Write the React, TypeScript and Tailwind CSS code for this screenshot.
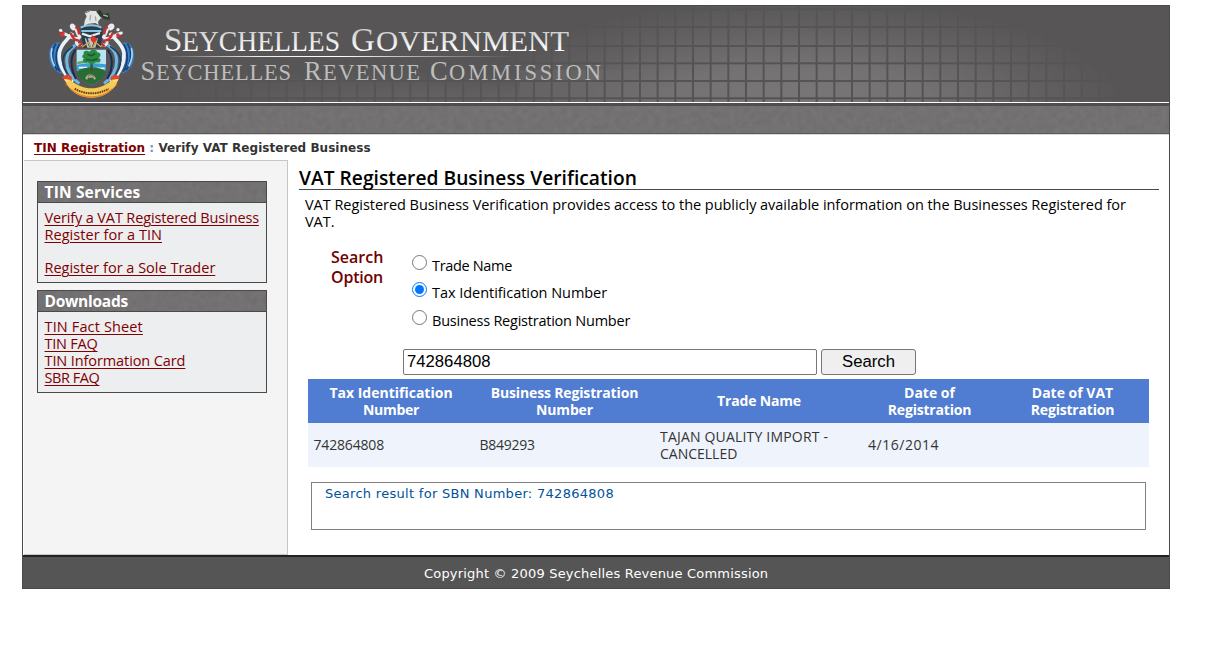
import React from "react";

const gridX = Array.from({ length: 58 }, (_, i) => 144.2 + i * 17.67);
const gridY = [8.5, 26, 45, 62.3, 80, 97.3];

function Emblem() {
  return (
    <g transform="translate(40 5) scale(0.3333)">
      {/* sailfish supporters */}
      <path d="M58 112C34 112 26 134 28 156C30 182 44 200 66 206C56 184 50 166 54 146Z" fill="#3d7fc0" />
      <path d="M48 116C34 134 34 170 52 196M58 118C46 140 44 172 60 200" stroke="#12407f" strokeWidth="5" fill="none" />
      <path d="M36 130C31 148 34 166 44 184" stroke="#a9d8f2" strokeWidth="5" fill="none" />
      <path d="M250 112C274 112 284 134 282 156C280 182 266 200 246 206C254 184 260 166 256 146Z" fill="#3d7fc0" />
      <path d="M262 116C276 134 276 170 258 196M252 118C264 140 266 172 250 200" stroke="#12407f" strokeWidth="5" fill="none" />
      <path d="M274 130C279 148 276 166 266 184" stroke="#a9d8f2" strokeWidth="5" fill="none" />
      <path d="M98 84C84 104 62 116 58 144C54 172 70 204 98 232" stroke="#e9f2fa" strokeWidth="11" fill="none" />
      <path d="M106 120C88 134 80 146 80 168C80 194 94 218 118 236" stroke="#6fb8e6" strokeWidth="9" fill="none" />
      <path d="M98 124C82 138 70 146 68 166C68 186 78 204 90 218" stroke="#173f66" strokeWidth="5" fill="none" />
      <path d="M210 84C224 104 248 116 252 144C254 172 240 204 212 232" stroke="#e9f2fa" strokeWidth="11" fill="none" />
      <path d="M204 120C222 134 230 146 230 168C230 194 216 218 192 236" stroke="#6fb8e6" strokeWidth="9" fill="none" />
      <path d="M210 124C228 138 240 146 242 166C242 186 232 204 220 218" stroke="#173f66" strokeWidth="5" fill="none" />
      <path d="M108 134C92 150 88 186 108 222M202 134C218 150 222 186 202 222" stroke="#182d4c" strokeWidth="6" fill="none" />
      {/* mantling */}
      <path d="M120 96C108 88 112 70 100 62C94 56 90 66 100 72M116 100C94 106 84 86 66 84M124 118C112 126 104 112 114 104" stroke="#ececf0" strokeWidth="9" fill="none" strokeLinecap="round" />
      <path d="M190 96C202 88 198 70 210 62C218 56 224 66 212 72M194 100C216 106 226 86 244 84M186 118C198 126 208 112 196 104" stroke="#ececf0" strokeWidth="9" fill="none" strokeLinecap="round" />
      <path d="M106 66C116 70 116 80 117 88M92 84C98 100 108 108 118 106M58 82L74 86M116 124L128 114" stroke="#d32b2b" strokeWidth="7" fill="none" />
      <path d="M204 66C194 70 194 80 193 88M218 84C212 100 202 108 192 106M230 88L242 96M194 124L182 114" stroke="#d32b2b" strokeWidth="7" fill="none" />
      <circle cx="62" cy="76" r="5" fill="#eee" /><circle cx="66" cy="90" r="5" fill="#d33" />
      <circle cx="234" cy="74" r="5" fill="#eee" /><circle cx="234" cy="90" r="5" fill="#d33" />
      {/* helmet and crest */}
      <path d="M122 74C126 58 182 58 188 76L182 128H130Z" fill="#293a49" />
      <path d="M122 68C138 58 168 58 184 68M124 78H184" stroke="#86c7e6" strokeWidth="6" fill="none" />
      <path d="M126 86L150 94L180 84" stroke="#e6edf1" strokeWidth="7" fill="none" />
      <path d="M134 100H174L166 128H142Z" fill="#b9c7d1" />
      <path d="M140 98L150 126M168 98L158 126" stroke="#314254" strokeWidth="5" />
      <path d="M156 90L172 102L164 118L152 106Z" fill="#dd3427" />
      <path d="M126 126L146 112L152 128M184 126L166 112L158 128" stroke="#d8a23a" strokeWidth="4" fill="none" />
      <path d="M134 24C142 14 156 18 164 18C172 16 180 26 190 34L186 40L182 40L174 50L176 60L166 54L146 56L132 62L134 48L140 34Z" fill="#e2e5e3" />
      <path d="M170 20L180 14L190 28L206 24L210 44L194 42L182 36ZM136 24L150 18" fill="#2b3830" stroke="#38463d" strokeWidth="2" />
      <path d="M190 30L204 34" stroke="#a7b5a0" strokeWidth="4" />
      <path d="M152 30L150 46M166 34L168 48" stroke="#a3a9ab" strokeWidth="4" fill="none" />
      {/* shield */}
      <path d="M110 134H198V178C198 214 178 230 154 240C130 230 110 214 110 178Z" fill="#b8e3f5" />
      <path d="M110 180C132 172 174 174 198 178V196H110Z" fill="#3c9fd2" />
      <path d="M112 170L138 166L148 172L112 178Z" fill="#5ba765" />
      <path d="M116 188H142M170 190H194" stroke="#e8f6fb" strokeWidth="5" />
      <path d="M111 200C130 184 176 184 197 198C192 220 174 232 154 240C134 232 116 220 111 200Z" fill="#276c34" />
      <path d="M152 170L150 198H160L157 168Z" fill="#3d5a26" />
      <path d="M132 148C126 138 142 134 148 140C156 130 172 134 172 142C184 142 184 156 176 158C188 164 180 176 168 172C158 180 148 178 144 172C132 176 124 168 132 160C124 158 126 150 132 148Z" fill="#2c8742" />
      <path d="M142 148L154 152L166 146M138 164L156 166L172 162" stroke="#15552c" strokeWidth="4" fill="none" />
      <path d="M136 222C136 204 164 202 168 222L162 224L160 218H144L142 224Z" fill="#b9a58a" />
      <path d="M144 214L152 209L161 214" stroke="#59462f" strokeWidth="2" fill="none" />
      {/* motto ribbon */}
      <path d="M66 216L82 208L96 216L94 240L76 242L78 230Z" fill="#df4a2c" />
      <path d="M240 216L226 208L212 216L214 240L232 242L230 230Z" fill="#df4a2c" />
      <path d="M72 222L90 224C108 240 132 250 154 250C178 250 200 240 216 224L236 222L226 244C206 266 182 278 154 278C126 278 100 266 84 244Z" fill="#f5ca55" />
      <path d="M104 251C120 261 138 265 154 265C172 265 190 261 206 251" stroke="#6d3f20" strokeWidth="6" strokeDasharray="5 2" fill="none" />
      <path d="M92 252C112 270 134 276 154 276C176 276 200 268 216 252" stroke="#e9872f" strokeWidth="4" fill="none" />
      <path d="M74 224L88 228M234 224L220 228" stroke="#f9dfa0" strokeWidth="4" />
    </g>
  );
}

function Banner() {
  return (
    <svg viewBox="23 5 1146 97" width="1146" height="97" className="block shrink-0">
      <defs>
        <radialGradient id="glow" gradientUnits="userSpaceOnUse" cx="0" cy="0" r="1" gradientTransform="translate(800 108) scale(330 112)">
          <stop offset="0" stopColor="#fff" />
          <stop offset="0.4" stopColor="#fff" stopOpacity="0.82" />
          <stop offset="0.75" stopColor="#fff" stopOpacity="0.3" />
          <stop offset="1" stopColor="#fff" stopOpacity="0" />
        </radialGradient>
        <linearGradient id="low" gradientUnits="userSpaceOnUse" x1="150" y1="0" x2="760" y2="0">
          <stop offset="0" stopColor="#fff" stopOpacity="0" />
          <stop offset="0.25" stopColor="#fff" stopOpacity="0.25" />
          <stop offset="0.45" stopColor="#fff" stopOpacity="0.38" />
          <stop offset="0.72" stopColor="#fff" stopOpacity="0.2" />
          <stop offset="1" stopColor="#fff" stopOpacity="0" />
        </linearGradient>
        <linearGradient id="lift" x1="0" y1="0" x2="0" y2="1">
          <stop offset="0" stopColor="#000" />
          <stop offset="1" stopColor="#000" stopOpacity="0" />
        </linearGradient>
        <linearGradient id="rule" x1="0" y1="0" x2="1" y2="0">
          <stop offset="0" stopColor="#e5efe9" stopOpacity="0.1" />
          <stop offset="0.25" stopColor="#e5efe9" />
          <stop offset="0.5" stopColor="#fff" />
          <stop offset="1" stopColor="#dfe8e3" stopOpacity="0" />
        </linearGradient>
        <linearGradient id="letters" x1="0" y1="0" x2="0" y2="1">
          <stop offset="0.2" stopColor="#c9c9c9" />
          <stop offset="0.8" stopColor="#ffffff" />
        </linearGradient>
        <mask id="fade" maskUnits="userSpaceOnUse" x="23" y="5" width="1146" height="97">
          <rect x="23" y="5" width="1146" height="97" fill="url(#glow)" />
          <rect x="150" y="70" width="610" height="32" fill="url(#low)" />
          <rect x="150" y="69" width="370" height="28" fill="url(#lift)" />
        </mask>
      </defs>
      <rect x="23" y="5" width="1146" height="97" fill="#575556" />
      <g mask="url(#fade)">
        <rect x="23" y="5" width="1146" height="97" fill="#7a7879" />
        {gridX.map((x) => <rect key={x} x={x} y="5" width="2" height="97" fill="#555354" />)}
        {gridY.map((y) => <rect key={y} x="23" y={y} width="1146" height="2" fill="#555354" />)}
      </g>
      <rect x="23" y="5" width="1146" height="1" fill="#4b4a4b" />
      <Emblem />
      <g fontFamily="Liberation Serif, serif" fill="url(#letters)">
        <text y="51" fontSize="28.5">
          <tspan x="164" fontSize="33">S</tspan>
          <tspan x="182" textLength="158" lengthAdjust="spacingAndGlyphs">EYCHELLES</tspan>
        </text>
        <text y="51" fontSize="28.5">
          <tspan x="351" fontSize="33">G</tspan>
          <tspan x="376" textLength="193" lengthAdjust="spacingAndGlyphs">OVERNMENT</tspan>
        </text>
      </g>
      <rect x="170" y="56" width="345" height="1" fill="url(#rule)" />
      <g fontFamily="Liberation Serif, serif" fill="#bdbdbd">
        <text y="79.5" fontSize="22.5">
          <tspan x="140.5" fontSize="26.5">S</tspan>
          <tspan x="156" textLength="135">EYCHELLES</tspan>
        </text>
        <text y="79.5" fontSize="22.5">
          <tspan x="304" fontSize="26.5">R</tspan>
          <tspan x="323" textLength="97">EVENUE</tspan>
        </text>
        <text y="79.5" fontSize="22.5">
          <tspan x="430" fontSize="26.5">C</tspan>
          <tspan x="449" textLength="152">OMMISSION</tspan>
        </text>
      </g>
    </svg>
  );
}

function Texture() {
  return (
    <svg width="100%" height="100%" className="absolute inset-0" aria-hidden="true">
      <filter id="grain" x="0" y="0" width="100%" height="100%" colorInterpolationFilters="sRGB">
        <feTurbulence type="fractalNoise" baseFrequency="0.16" numOctaves="3" seed="4" />
        <feColorMatrix values="0.08 0 0 0 0.412  0.08 0 0 0 0.404  0.08 0 0 0 0.408  0 0 0 0 1" />
      </filter>
      <rect width="100%" height="100%" fill="#737172" />
      <rect width="100%" height="100%" fill="#737172" filter="url(#grain)" opacity="0.65" />
    </svg>
  );
}

function Panel({ title, titleClass, children }: { title: string; titleClass: string; children: React.ReactNode }) {
  return (
    <section className="w-[230px] border border-[#4a4a4a] bg-[#edeef0]">
      <h2 className={"relative h-[21px] border-b border-[#4a4a4a] pl-[6.5px] text-[15.5px] leading-[21px] font-bold text-white " + titleClass}>
        <Texture />
        <span className="relative">{title}</span>
      </h2>
      <div className="flex flex-col items-start pt-[6px] pl-[6.5px] text-[14.5px] leading-[17px] text-[#800000]">{children}</div>
    </section>
  );
}

const link = "h-[17px] whitespace-nowrap underline decoration-1 underline-offset-[2px] ";

function Option({ label, labelClass, checked }: { label: string; labelClass: string; checked?: boolean }) {
  return (
    <label className="flex h-[27.5px] items-start">
      <input type="radio" name="option" defaultChecked={checked} className="m-0 h-[15px] w-[15px]" />
      <span className={"mt-[2px] ml-[5px] leading-[17px] whitespace-nowrap " + labelClass}>{label}</span>
    </label>
  );
}

export default function App() {
  return (
    <div className="h-[655px] overflow-hidden bg-white pt-[5px] pl-[22px] font-['Open_Sans',sans-serif] text-black">
      <div className="flex h-[584px] w-[1148px] flex-col border-x border-b border-[#4a4a4a]">
        <Banner />
        <div className="h-px shrink-0 bg-white" />
        <div className="h-[3px] shrink-0 bg-[#504f50]" />
        <div className="relative h-[27px] shrink-0"><Texture /></div>
        <div className="h-px shrink-0 bg-[#5b595a]" />
        <div className="h-px shrink-0 bg-[#d8d8d8]" />
        <div className="flex h-[25px] shrink-0 pl-[11px] font-['DejaVu_Sans',sans-serif] text-[12px] leading-[26px] font-bold tracking-[0.04px] whitespace-pre text-[#333]">
          <a className="text-[#800000] underline underline-offset-[2px]">TIN Registration</a>
          <span> <span className="text-[#7a8fc4]">:</span> Verify VAT Registered Business</span>
        </div>

        <div className="flex h-[395px] shrink-0">
          <aside className="ml-px flex w-[264px] shrink-0 flex-col gap-[7px] border-t border-r border-b border-[#c8c6c6] bg-[#f4f4f4] pt-[20px] pl-[13px]">
            <Panel title="TIN Services" titleClass="tracking-[0.17px]">
              <a className={link + "tracking-[-0.14px]"}>Verify a VAT Registered Business</a>
              <a className={link + "mb-[16px] tracking-[0.05px]"}>Register for a TIN</a>
              <a className={link + "mb-[6px]"}>Register for a Sole Trader</a>
            </Panel>
            <Panel title="Downloads" titleClass="tracking-[-0.25px]">
              <a className={link + "tracking-[0.14px]"}>TIN Fact Sheet</a>
              <a className={link + "tracking-[-0.23px]"}>TIN FAQ</a>
              <a className={link + "tracking-[-0.1px]"}>TIN Information Card</a>
              <a className={link + "mb-[6px] tracking-[-0.43px]"}>SBR FAQ</a>
            </Panel>
          </aside>

          <main className="flex w-[871px] shrink-0 flex-col pl-[11px]">
            <h1 className="mt-[5px] h-[25px] border-b border-[#4a4a4a] text-[19.2px] leading-[26px] font-semibold tracking-[0.03px] whitespace-nowrap">VAT Registered Business Verification</h1>
            <p className="mt-[6px] h-[34px] pl-[6px] text-[14.5px] leading-[17px] tracking-[-0.038px] whitespace-nowrap">
              VAT Registered Business Verification provides access to the publicly available information on the Businesses Registered for<br />VAT.
            </p>
            <div className="mt-[17px] flex h-[102px] pl-[32px]">
              <div className="w-[81px] text-[16px] leading-[20px] font-semibold text-[#700000]">
                <div>Search</div>
                <div className="tracking-[-0.2px]">Option</div>
              </div>
              <div className="pt-[7.5px] text-[14.5px]">
                <Option label="Trade Name" labelClass="tracking-[-0.33px]" />
                <Option label="Tax Identification Number" labelClass="tracking-[-0.04px]" checked />
                <Option label="Business Registration Number" labelClass="tracking-[-0.23px]" />
              </div>
            </div>
            <div className="flex h-[26px] shrink-0 gap-[4px] pl-[104px] font-['Liberation_Sans',sans-serif] text-[16.7px]">
              <input type="text" defaultValue="742864808" className="h-[26px] w-[414px] rounded-[2px] border border-[#767676] bg-white px-[3px] py-0 text-black" />
              <button className="h-[26px] w-[95px] rounded-[3px] border border-[#767676] bg-[#efefef] leading-[24px]">Search</button>
            </div>
            <div className="mt-[4px] ml-[9px] grid w-[841px] shrink-0 grid-cols-[166px_181px_208px_133px_153px] grid-rows-[44px_44px] items-center bg-[#507cd1] text-center text-[14px] leading-[17px] font-bold text-white">
              <div>Tax Identification<br /><span className="tracking-[-0.3px]">Number</span></div>
              <div className="tracking-[-0.15px]">Business Registration<br />Number</div>
              <div className="pb-px tracking-[-0.16px]">Trade Name</div>
              <div>Date of<br /><span className="tracking-[-0.2px]">Registration</span></div>
              <div>Date of VAT<br /><span className="tracking-[-0.2px]">Registration</span></div>
              <div className="col-span-5 grid h-[44px] grid-cols-subgrid items-center bg-[#eff3fb] text-left font-normal text-[#333]">
                <div className="pb-px pl-[5.5px] tracking-[-0.17px]">742864808</div>
                <div className="pb-px pl-[5.5px] tracking-[-0.28px]">B849293</div>
                <div className="pl-[5px] whitespace-nowrap"><span className="tracking-[0.19px]">TAJAN QUALITY IMPORT -</span><br />CANCELLED</div>
                <div className="pb-px pl-[5px] tracking-[0.52px]">4/16/2014</div>
                <div />
              </div>
            </div>
            <div className="mt-[15px] ml-[12px] h-[48px] w-[835px] shrink-0 border border-[#808080] pl-[13px] font-['DejaVu_Sans',sans-serif] text-[13px] leading-[21px] tracking-[0.29px] text-[#00529b]">
              Search result for SBN Number: 742864808
            </div>
          </main>
        </div>
        <footer className="h-[33px] shrink-0 border-t-2 border-[#222] bg-[#555] pl-[401px] font-['DejaVu_Sans',sans-serif] text-[13px] leading-[33px] tracking-[0.19px] text-white">
          Copyright © 2009 Seychelles Revenue Commission
        </footer>
      </div>
    </div>
  );
}
